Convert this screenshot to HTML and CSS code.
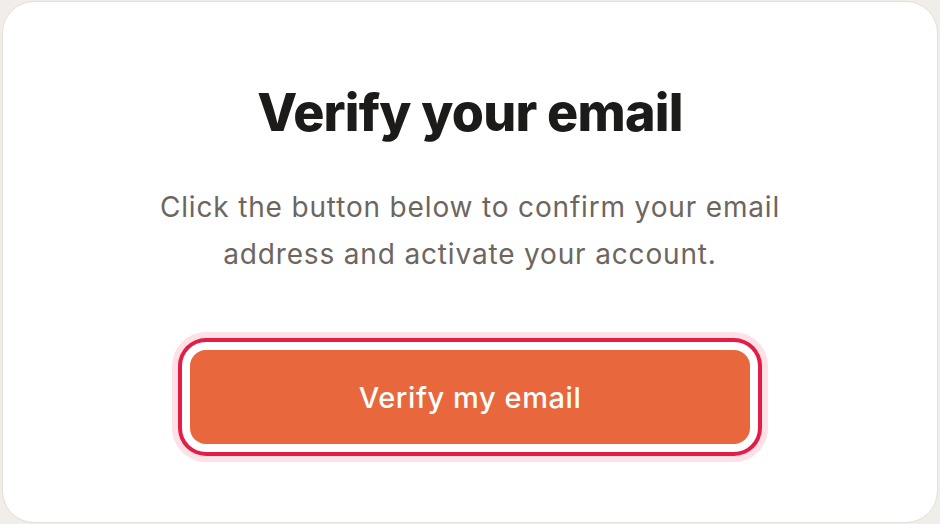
FILE: index.html
```html
<!DOCTYPE html>
<html lang="en">
<head>
<meta charset="utf-8">
<title>Verify your email</title>
<link rel="stylesheet" href="styles.css">
</head>
<body>
<div class="page">
  <main class="card">
    <h1 class="title">Verify your email</h1>
    <p class="lead">Click the button below to confirm your email address and activate your account.</p>
    <button class="cta" type="button">Verify my email</button>
  </main>
</div>
</body>
</html>
```

FILE: styles.css
```css
html, body {
  margin: 0;
  padding: 0;
  background: #f1eee9;
}
.page {
  width: 940px;
  height: 524px;
  padding: 1px 2px;
  box-sizing: border-box;
}
.card {
  height: 522px;
  box-sizing: border-box;
  background: #ffffff;
  border: 1px solid #e4dfd7;
  border-radius: 32px;
  display: flex;
  flex-direction: column;
  align-items: center;
  padding-top: 80px;
  font-family: Inter, "Liberation Sans", sans-serif;
}
.title {
  margin: 0;
  font-size: 52px;
  line-height: 1.2;
  font-weight: 800;
  letter-spacing: -0.015em;
  color: #1c1b1a;
}
.lead {
  margin: 40px 0 0;
  max-width: 660px;
  text-align: center;
  font-size: 28px;
  line-height: 47px;
  font-weight: 400;
  letter-spacing: 0.03em;
  color: #6d665f;
}
.cta {
  margin-top: 72px;
  width: 560px;
  height: 94px;
  border: none;
  border-radius: 16px;
  background: #e8673c;
  color: #ffffff;
  font-family: Inter, "Liberation Sans", sans-serif;
  font-size: 29px;
  font-weight: 500;
  letter-spacing: 0.02em;
  box-shadow: 0 0 0 8px #ffffff, 0 0 0 12px #e11d48, 0 0 0 18px #fde1e6;
  cursor: pointer;
}
```
